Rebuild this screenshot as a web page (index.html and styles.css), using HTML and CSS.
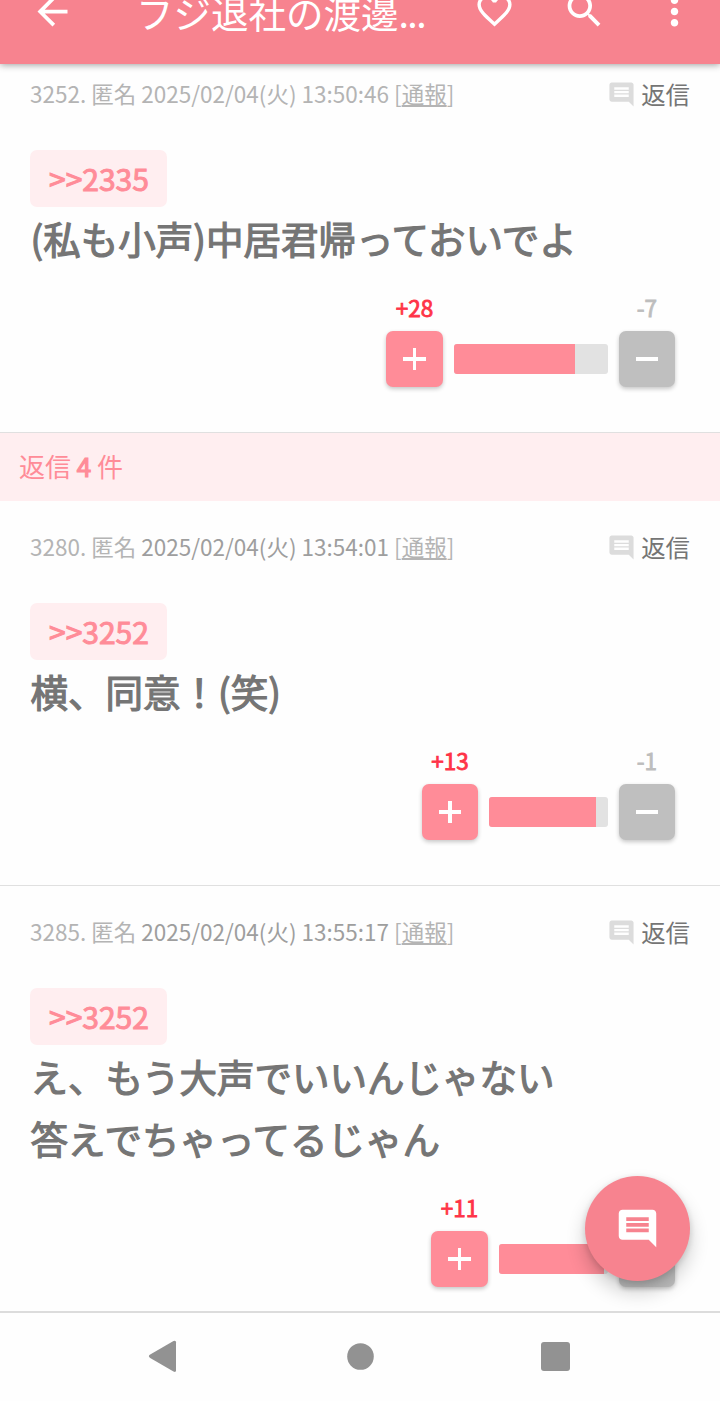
FILE: index.html
```html
<!DOCTYPE html>
<html lang="ja">
<head>
  <meta charset="UTF-8">
  <meta name="viewport" content="width=device-width, initial-scale=1.0">
  <title>フジ退社の渡邊...</title>
  <link rel="stylesheet" href="styles.css">
</head>
<body>

<svg width="0" height="0" class="symbols">
  <symbol id="comment" viewBox="0 0 24 24">
    <path d="M21.99 4c0-1.1-.89-2-1.99-2H4c-1.1 0-2 .9-2 2v12c0 1.1.9 2 2 2h14l4 4-.01-18zM18 14H6v-2h12v2zm0-3H6V9h12v2zm0-3H6V6h12v2z"/>
  </symbol>
</svg>

<header id="header">
  <svg class="icon back" viewBox="0 0 24 24"><path d="M20 11H7.83l5.59-5.59L12 4l-8 8 8 8 1.41-1.41L7.83 13H20v-2z"/></svg>
  <h1>フジ退社の渡邊<span class="dots">...</span></h1>
  <svg class="icon heart" viewBox="0 0 24 24"><path d="M16.5 3c-1.74 0-3.41.81-4.5 2.09C10.91 3.81 9.24 3 7.5 3 4.42 3 2 5.42 2 8.5c0 3.78 3.4 6.86 8.55 11.54L12 21.35l1.45-1.32C18.6 15.36 22 12.28 22 8.5 22 5.42 19.58 3 16.5 3zm-4.4 15.55l-.1.1-.1-.1C7.14 14.24 4 11.39 4 8.5 4 6.5 5.5 5 7.5 5c1.54 0 3.04.99 3.57 2.36h1.87C13.46 5.99 14.96 5 16.5 5c2 0 3.5 1.5 3.5 3.5 0 2.89-3.14 5.74-7.9 10.05z"/></svg>
  <svg class="icon search" viewBox="0 0 24 24"><path d="M15.5 14h-.79l-.28-.27C15.41 12.59 16 11.11 16 9.5 16 5.91 13.09 3 9.5 3S3 5.91 3 9.5 5.91 16 9.5 16c1.61 0 3.09-.59 4.23-1.57l.27.28v.79l5 4.99L20.49 19l-4.99-5zm-6 0C7.01 14 5 11.99 5 9.5S7.01 5 9.5 5 14 7.01 14 9.5 11.99 14 9.5 14z"/></svg>
  <svg class="icon more" viewBox="0 0 24 24"><path d="M12 8c1.1 0 2-.9 2-2s-.9-2-2-2-2 .9-2 2 .9 2 2 2zm0 2c-1.1 0-2 .9-2 2s.9 2 2 2 2-.9 2-2-.9-2-2-2zm0 6c-1.1 0-2 .9-2 2s.9 2 2 2 2-.9 2-2-.9-2-2-2z"/></svg>
</header>

<main>
  <article class="post">
    <div class="meta">
      <p>3252. 匿名 2025/02/04(火) 13:50:46 [<a>通報</a>]</p>
      <div class="reply"><svg><use href="#comment"/></svg>返信</div>
    </div>
    <div class="anchor">&gt;&gt;2335</div>
    <p class="text">(私も小声)中居君帰っておいでよ</p>
    <div class="votes">
      <div class="vote plus"><span>+28</span><button></button></div>
      <div class="bar" style="width: 154.25px"><div style="width: 121.4px"></div></div>
      <div class="vote minus"><span>-7</span><button></button></div>
    </div>
  </article>

  <h2 class="reply-count">返信 <b>4</b> 件</h2>

  <article class="post">
    <div class="meta">
      <p>3280. 匿名 <time>2025/02/04(火) 13:54:01</time> [<a>通報</a>]</p>
      <div class="reply"><svg><use href="#comment"/></svg>返信</div>
    </div>
    <div class="anchor">&gt;&gt;3252</div>
    <p class="text">横、同意！(笑)</p>
    <div class="votes">
      <div class="vote plus"><span>+13</span><button></button></div>
      <div class="bar" style="width: 118.95px"><div style="width: 107px"></div></div>
      <div class="vote minus"><span>-1</span><button></button></div>
    </div>
  </article>

  <article class="post">
    <div class="meta">
      <p>3285. 匿名 <time>2025/02/04(火) 13:55:17</time> [<a>通報</a>]</p>
      <div class="reply"><svg><use href="#comment"/></svg>返信</div>
    </div>
    <div class="anchor">&gt;&gt;3252</div>
    <p class="text">え、もう大声でいいんじゃない<br>答えでちゃってるじゃん</p>
    <div class="votes">
      <div class="vote plus"><span>+11</span><button></button></div>
      <div class="bar" style="width: 109.25px"><div style="width: 105.4px"></div></div>
      <div class="vote minus"><span></span><button></button></div>
    </div>
  </article>
</main>

<div id="fab"><svg><use href="#comment"/></svg></div>

<nav id="navbar">
  <svg viewBox="0 0 30 34"><path d="M.2 15.600 23.500 2.100Q26 .8 26 3.300v28q0 2.500-2.500 1.200L.2 19Q-2.500 17.300.2 15.600z"/></svg>
  <svg viewBox="0 0 30 34"><circle cx="15.500" cy="17.500" r="13.300"/></svg>
  <svg viewBox="0 0 30 34"><rect x="1" y="3" width="29" height="29" rx="3"/></svg>
</nav>

</body>
</html>
```

FILE: styles.css
```css
* {
  box-sizing: border-box;
  margin: 0;
  padding: 0;
}

html, body {
  height: 100%;
  overflow: hidden;
}

body {
  font-family: 'Noto Sans CJK JP', sans-serif;
  font-weight: 400;
  background-color: #fefefe;
  color: #757575;
}

.symbols {
  display: block;
}

/* Header, partly scrolled off the top */
#header {
  position: relative;
  z-index: 2;
  display: flex;
  align-items: flex-start;
  height: 64px;
  background-color: #f7838f;
  color: white;
  box-shadow: 0 1px 7px rgba(0, 0, 0, 0.38);
}

.icon {
  flex: none;
  width: 45px;
  height: 45px;
  margin-top: -11px;
  fill: white;
}

.back {
  margin-left: 30px;
}

#header h1 {
  width: 338px;
  margin: -16px 0 0 61px;
  font-size: 37.5px;
  font-weight: 400;
  line-height: 56px;
  white-space: nowrap;
}

.dots {
  letter-spacing: -1.6px;
}

.heart {
  width: 41px;
  height: 41px;
  margin-top: -10px;
}

.search {
  margin-left: 47px;
  margin-top: -12px;
}

.more {
  margin-left: 45px;
}

main {
  margin-top: -16px;
}

/* Comments */
.post {
  padding: 30px 30px 45px;
  border-bottom: 1px solid #e0e0e0;
}

.meta {
  display: flex;
  justify-content: space-between;
  height: 32px;
  margin-bottom: 40px;
  font-size: 22.5px;
  line-height: 30px;
  color: #b4b4b4;
}

.meta time {
  color: #9e9e9e;
}

.meta a {
  text-decoration: underline;
}

.reply {
  display: flex;
  align-items: center;
  gap: 5px;
  font-size: 24.4px;
  line-height: 32px;
  color: #757575;
}

.reply svg {
  width: 29px;
  height: 29px;
  margin-top: 1px;
  fill: #dcdcdc;
}

.anchor {
  width: 137px;
  height: 57px;
  padding-left: 19px;
  border-radius: 7px;
  background-color: #ffeef0;
  color: #ff8c98;
  font-size: 30px;
  line-height: 56px;
  -webkit-text-stroke: 1px #ff8c98;
}

.text {
  height: 64px;
  padding-left: 0.6px;
  font-size: 37.5px;
  line-height: 61.6px;
  -webkit-text-stroke: 1.2px #757575;
}

.text:has(br) {
  height: 126px;
}

/* Plus / minus voting */
.votes {
  display: flex;
  justify-content: flex-end;
  align-items: flex-end;
  gap: 10.9px;
  height: 116px;
  padding-right: 15px;
}

.vote {
  display: flex;
  flex-direction: column;
  align-items: center;
  font-size: 22.5px;
  line-height: 30px;
}

.vote span {
  height: 30px;
  margin-bottom: 9px;
}

.plus span {
  color: #ff3347;
  -webkit-text-stroke: 0.8px #ff3347;
}

.minus span {
  color: #bdbdbd;
  -webkit-text-stroke: 0.8px #bdbdbd;
}

.vote button {
  display: grid;
  place-items: center;
  width: 56.25px;
  height: 56px;
  border: none;
  border-radius: 7px;
  background-color: #bfbfbf;
  box-shadow: 0 2px 4px rgba(0, 0, 0, 0.22);
}

.plus button {
  background-color: #ff8c98;
}

.vote button::before,
.plus button::after {
  content: '';
  grid-area: 1 / 1;
  width: 22.5px;
  height: 4px;
  background-color: white;
}

.plus button::after {
  width: 3.75px;
  height: 22px;
}

.bar {
  height: 30px;
  margin-bottom: 13px;
  border-radius: 3px;
  background-color: #e2e2e2;
  overflow: hidden;
}

.bar div {
  height: 100%;
  background-color: #ff8c98;
}

/* Number of replies */
.reply-count {
  height: 68px;
  padding-left: 19px;
  background-color: #ffeef0;
  color: #ff8c98;
  font-size: 26px;
  font-weight: 400;
  line-height: 66px;
}

.reply-count b {
  font-weight: 400;
  -webkit-text-stroke: 1.2px #ff8c98;
}

/* Floating comment button */
#fab {
  position: fixed;
  right: 30px;
  bottom: 120px;
  z-index: 3;
  display: grid;
  place-items: center;
  width: 105px;
  height: 105px;
  border-radius: 50%;
  background-color: #f7838f;
  box-shadow: 0 11px 19px rgba(0, 0, 0, 0.2), 0 2px 7px rgba(0, 0, 0, 0.14);
}

#fab svg {
  width: 45px;
  height: 45px;
  fill: white;
}

/* System navigation */
#navbar {
  position: fixed;
  left: 0;
  right: 0;
  bottom: 0;
  z-index: 4;
  display: flex;
  justify-content: center;
  gap: 165px;
  height: 90px;
  padding-top: 26px;
  border-top: 2px solid #dcdcdc;
  background-color: #fefefe;
}

#navbar svg {
  width: 30px;
  height: 34px;
  overflow: visible;
  fill: #929292;
}
```
